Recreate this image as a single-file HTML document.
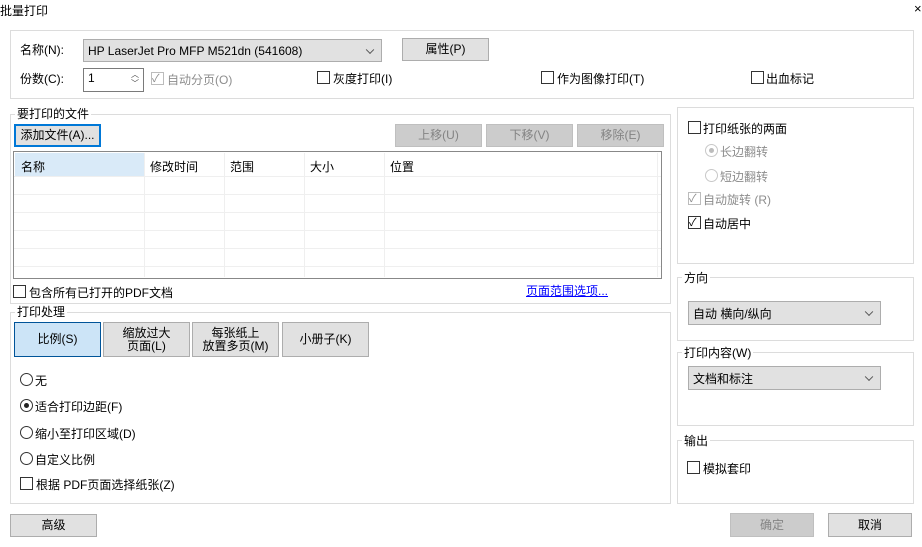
<!DOCTYPE html>
<html><head><meta charset="utf-8"><style>
*{box-sizing:border-box;margin:0;padding:0}
body{width:922px;height:547px;background:#fff;position:relative;overflow:hidden;font-family:"Liberation Sans","Noto Sans CJK SC",sans-serif;font-size:12px;color:#000}
.a{position:absolute;white-space:nowrap}
.g{position:absolute;border:1px solid #dcdcdc}
.lg{position:absolute;background:#fff;padding:0 2px;line-height:14px}
.btn{position:absolute;background:#e1e1e1;border:1px solid #adadad;text-align:center;display:flex;align-items:center;justify-content:center;line-height:13px}
.dis{background:#cccccc;border-color:#bfbfbf;color:#838383}
.cb{position:absolute;width:13px;height:13px;border:1px solid #333;background:#fff}
.cbg{border-color:#bcbcbc}
.rd{position:absolute;width:13px;height:13px;border:1px solid #333;border-radius:50%;background:#fff}
.sel{position:absolute;background:#e1e1e1;border:1px solid #adadad;padding-left:4px;display:flex;align-items:center}
.chev{position:absolute;right:8px;top:50%;width:6px;height:6px;border-right:1px solid #555;border-bottom:1px solid #555;transform:translateY(-70%) rotate(45deg)}
.gr{color:#8d8d8d}
.hl{position:absolute;height:1px;background:#efefef}
.vl{position:absolute;width:1px;background:#efefef}
</style></head><body>
<div class="a" style="left:0;top:2px;font-size:12px">批量打印</div>
<div class="a" style="left:914px;top:1px;font-size:13px">×</div>

<div class="g" style="left:10px;top:30px;width:904px;height:69px"></div>
<div class="a" style="left:20px;top:41px">名称(N):</div>
<div class="sel" style="left:83px;top:39px;width:299px;height:23px">HP LaserJet Pro MFP M521dn (541608)<span class="chev"></span></div>
<div class="btn" style="left:402px;top:38px;width:87px;height:23px">属性(P)</div>
<div class="a" style="left:20px;top:70px">份数(C):</div>
<div class="a" style="left:83px;top:68px;width:61px;height:24px;border:1px solid #7a7a7a;padding:2px 4px">1<span style="position:absolute;right:4px;top:1px;font-size:8px;line-height:9px;color:#444">︿<br>﹀</span></div>
<div class="cb cbg" style="left:151px;top:72px"></div><div class="a gr" style="left:152px;top:70px;font-size:11px">✓</div>
<div class="a gr" style="left:167px;top:71px">自动分页(O)</div>
<div class="cb" style="left:317px;top:71px"></div><div class="a" style="left:333px;top:70px">灰度打印(I)</div>
<div class="cb" style="left:541px;top:71px"></div><div class="a" style="left:557px;top:70px">作为图像打印(T)</div>
<div class="cb" style="left:751px;top:71px"></div><div class="a" style="left:766px;top:70px">出血标记</div>

<div class="g" style="left:10px;top:114px;width:661px;height:190px"></div>
<div class="lg" style="left:15px;top:107px">要打印的文件</div>
<div class="btn" style="left:14px;top:124px;width:87px;height:23px;border:2px solid #0078d7">添加文件(A)...</div>
<div class="btn dis" style="left:395px;top:124px;width:87px;height:23px">上移(U)</div>
<div class="btn dis" style="left:486px;top:124px;width:87px;height:23px">下移(V)</div>
<div class="btn dis" style="left:577px;top:124px;width:87px;height:23px">移除(E)</div>
<div class="a" style="left:13px;top:151px;width:649px;height:128px;border:1px solid #888"></div>
<div class="a" style="left:15px;top:153px;width:129px;height:23px;background:#d9eaf8"></div>
<div class="vl" style="left:144px;top:153px;height:124px"></div>
<div class="vl" style="left:224px;top:153px;height:124px"></div>
<div class="vl" style="left:304px;top:153px;height:124px"></div>
<div class="vl" style="left:384px;top:153px;height:124px"></div>
<div class="vl" style="left:657px;top:153px;height:124px"></div>
<div class="hl" style="left:14px;top:176px;width:647px"></div>
<div class="hl" style="left:14px;top:194px;width:647px"></div>
<div class="hl" style="left:14px;top:212px;width:647px"></div>
<div class="hl" style="left:14px;top:230px;width:647px"></div>
<div class="hl" style="left:14px;top:248px;width:647px"></div>
<div class="hl" style="left:14px;top:266px;width:647px"></div>
<div class="a" style="left:21px;top:158px">名称</div>
<div class="a" style="left:150px;top:158px">修改时间</div>
<div class="a" style="left:230px;top:158px">范围</div>
<div class="a" style="left:310px;top:158px">大小</div>
<div class="a" style="left:390px;top:158px">位置</div>
<div class="cb" style="left:13px;top:285px"></div><div class="a" style="left:29px;top:284px">包含所有已打开的PDF文档</div>
<div class="a" style="left:526px;top:282px;color:#0000ff;text-decoration:underline">页面范围选项...</div>

<div class="g" style="left:10px;top:312px;width:661px;height:192px"></div>
<div class="lg" style="left:15px;top:305px">打印处理</div>
<div class="btn" style="left:14px;top:322px;width:87px;height:35px;background:#cce4f7;border-color:#005499">比例(S)</div>
<div class="btn" style="left:103px;top:322px;width:87px;height:35px">缩放过大<br>页面(L)</div>
<div class="btn" style="left:192px;top:322px;width:87px;height:35px">每张纸上<br>放置多页(M)</div>
<div class="btn" style="left:282px;top:322px;width:87px;height:35px">小册子(K)</div>
<div class="rd" style="left:20px;top:373px"></div><div class="a" style="left:35px;top:372px">无</div>
<div class="rd" style="left:20px;top:399px"></div><div class="a" style="left:24px;top:403px;width:5px;height:5px;border-radius:50%;background:#222"></div><div class="a" style="left:35px;top:398px">适合打印边距(F)</div>
<div class="rd" style="left:20px;top:426px"></div><div class="a" style="left:35px;top:425px">缩小至打印区域(D)</div>
<div class="rd" style="left:20px;top:452px"></div><div class="a" style="left:35px;top:451px">自定义比例</div>
<div class="cb" style="left:20px;top:477px"></div><div class="a" style="left:36px;top:476px">根据 PDF页面选择纸张(Z)</div>

<div class="btn" style="left:10px;top:514px;width:87px;height:23px">高级</div>
<div class="btn dis" style="left:730px;top:513px;width:84px;height:24px">确定</div>
<div class="btn" style="left:828px;top:513px;width:84px;height:24px">取消</div>

<div class="g" style="left:677px;top:107px;width:237px;height:157px"></div>
<div class="cb" style="left:688px;top:121px"></div><div class="a" style="left:703px;top:120px">打印纸张的两面</div>
<div class="rd" style="left:705px;top:144px;border-color:#c8c8c8"></div><div class="a" style="left:709px;top:148px;width:5px;height:5px;border-radius:50%;background:#bcbcbc"></div><div class="a gr" style="left:720px;top:143px">长边翻转</div>
<div class="rd" style="left:705px;top:169px;border-color:#c8c8c8"></div><div class="a gr" style="left:720px;top:168px">短边翻转</div>
<div class="cb cbg" style="left:688px;top:192px"></div><div class="a gr" style="left:689px;top:190px;font-size:11px">✓</div><div class="a gr" style="left:703px;top:191px">自动旋转 (R)</div>
<div class="cb" style="left:688px;top:216px"></div><div class="a" style="left:689px;top:214px;font-size:11px">✓</div><div class="a" style="left:703px;top:215px">自动居中</div>

<div class="g" style="left:677px;top:277px;width:237px;height:64px"></div>
<div class="lg" style="left:682px;top:271px">方向</div>
<div class="sel" style="left:688px;top:301px;width:193px;height:24px">自动 横向/纵向<span class="chev"></span></div>

<div class="g" style="left:677px;top:352px;width:237px;height:74px"></div>
<div class="lg" style="left:682px;top:346px">打印内容(W)</div>
<div class="sel" style="left:688px;top:366px;width:193px;height:24px">文档和标注<span class="chev"></span></div>

<div class="g" style="left:677px;top:440px;width:237px;height:64px"></div>
<div class="lg" style="left:682px;top:434px">输出</div>
<div class="cb" style="left:687px;top:461px"></div><div class="a" style="left:703px;top:460px">模拟套印</div>
</body></html>
